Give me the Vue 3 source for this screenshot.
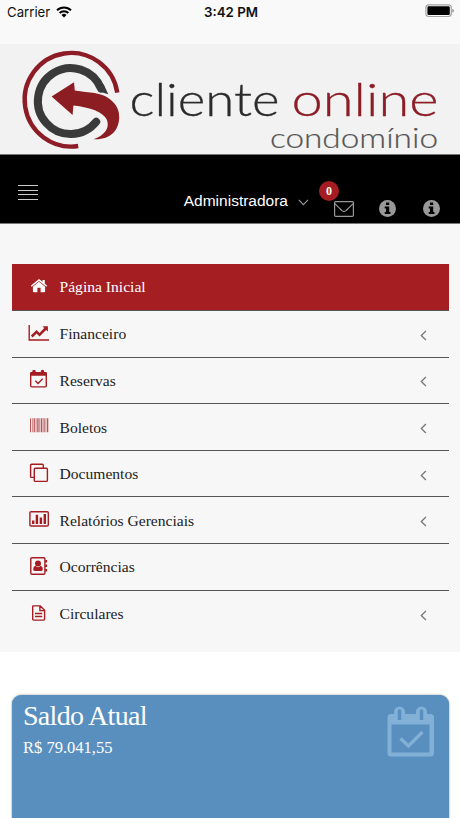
<template>
  <div class="screen">
    <div class="status-bar">
      <div class="carrier">
        <span>Carrier</span>
        <svg class="wifi" width="16" height="12" viewBox="0 0 16 12">
          <path d="M1 4.3a10 10 0 0 1 14 0" />
          <path d="M3.6 7a6.3 6.3 0 0 1 8.8 0" />
          <path class="dot" d="M8 11.4 5.5 8.9a3.6 3.6 0 0 1 5 0z" />
        </svg>
      </div>
      <span class="clock">3:42 PM</span>
      <svg class="battery" width="30" height="14" viewBox="0 0 30 14">
        <rect x="0.9" y="0.9" width="25.4" height="11.6" rx="3" fill="none" stroke="#a3a3a3" stroke-width="1.2" />
        <rect x="2.4" y="2.3" width="22.4" height="8.8" rx="1.4" fill="#000" />
        <path d="M27.4 4.8q1.5.5 1.5 1.9t-1.5 1.9z" fill="#8c8c8c" />
      </svg>
    </div>

    <header class="brand">
      <svg width="460" height="110" viewBox="0 0 460 110">
        <path class="ring-outer" d="M117.3 48.6A46.6 46.8 0 1 0 78.2 102" />
        <path class="ring-inner" d="M101 44.500A32.8 33 0 1 0 96.2 77.8" />
        <path class="ring-tip" d="M103.500 40 108.3 50.2 99 47.500 97 43z" />
        <path
          class="arrow"
          d="M51.6 52.6 74 38.3 74.8 46.6C90 49 101 48.5 109 54.5C117 60 119.5 67 119.2 74C118.5 87 110 96.2 93.5 95.2C104 91.5 110 85 107 76C103 67.5 90 63.5 73.4 61.5L72.6 71z"
        />
        <text class="word dark" x="129.5" y="72" textLength="150" lengthAdjust="spacingAndGlyphs">cliente</text>
        <text class="word red" x="291.5" y="72" textLength="147" lengthAdjust="spacingAndGlyphs">online</text>
        <text class="sub" x="270" y="103.5" textLength="168" lengthAdjust="spacingAndGlyphs">condomínio</text>
      </svg>
    </header>

    <nav class="topbar">
      <button class="burger" aria-label="Menu">
        <i v-for="n in 4" :key="n"></i>
      </button>
      <div class="profile">
        <span>Administradora</span>
        <svg width="11" height="7" viewBox="0 0 11 7">
          <path d="M0.8 0.8 5.4 5.6 10 0.8" fill="none" stroke="#999" stroke-width="1.1" />
        </svg>
      </div>
      <div class="mail">
        <svg width="20" height="16" viewBox="0 0 20 16" fill="none" stroke="#999" stroke-width="1.2">
          <rect x="0.6" y="0.6" width="18.8" height="14.8" rx="1.2" />
          <path d="M0.8 2.6C4 5.8 6 7.8 8 9.6Q10 11.2 12 9.6C14 7.8 16 5.8 19.2 2.6" />
        </svg>
        <span class="badge">0</span>
      </div>
      <svg v-for="n in 2" :key="n" class="info" width="17" height="17" viewBox="0 0 17 17">
        <circle cx="8.5" cy="8.5" r="8.5" fill="#999" />
        <path d="M7 2.6h3.2v2.5H7zM5.7 6.4h4.5v5.5h1.3v2H5.7v-2H7V8.4H5.7z" fill="#000" />
      </svg>
    </nav>

    <section class="menu-area">
      <ul class="menu">
        <li
          v-for="item in items"
          :key="item.label"
          class="menu-item"
          :class="{ active: item.active }"
        >
          <svg class="icon" width="24" height="24" viewBox="0 0 24 24">
            <path v-if="item.solid" class="solid" :d="item.solid" />
            <path v-if="item.line" class="line" :d="item.line" />
            <path v-if="item.bars" class="bars" :d="item.bars" />
          </svg>
          <span class="label">{{ item.label }}</span>
          <svg v-if="item.children" class="chevron" width="7" height="11" viewBox="0 0 7 11">
            <path d="M5.9 1 1.3 5.5 5.9 10" fill="none" stroke="#777" stroke-width="1.3" />
          </svg>
        </li>
      </ul>
    </section>

    <section class="cards">
      <article class="card">
        <div>
          <h2>Saldo Atual</h2>
          <p>R$ 79.041,55</p>
        </div>
        <svg class="card-icon" width="48" height="52" viewBox="0 0 48 52">
          <path
            fill-rule="evenodd"
            d="M4 8H7V6a5.5 5.5 0 0 1 11 0v2h11V6a5.5 5.5 0 0 1 11 0v2h3.500a3.500 3.500 0 0 1 3.500 3.500V47a3.500 3.500 0 0 1-3.500 3.500H4A3.500 3.500 0 0 1 .5 47V11.500A3.500 3.500 0 0 1 4 8zM4.500 18.500v28h38v-28zM10.800 5v9h3.400V5a1.700 1.700 0 0 0-3.400 0zM32.800 5v9h3.400V5a1.700 1.700 0 0 0-3.400 0z"
          />
          <path class="check" d="M13.500 32.500 21.500 40 35.500 26" />
        </svg>
      </article>
    </section>
  </div>
</template>

<script setup>
const items = [
  {
    label: 'Página Inicial',
    active: true,
    solid: 'M12 6.800 18.100 11.700V16.200Q18.100 17.300 17 17.300H13.600V12.800H10.400V17.300H7Q5.900 17.300 5.900 16.200V11.700zM12 4 15.500 6.800V5H17.800V8.700L20.200 10.700 19.300 11.800 12 5.900 4.700 11.800 3.800 10.700z',
  },
  {
    label: 'Financeiro',
    children: true,
    solid: 'M1.500 3H2.900V17.200H22V18.700H1.500zM15.500 4.200H20.900V9.600L19.100 7.900 12.500 14.400 9.600 11.600 5.600 15.600 3.900 13.600 9.600 8.100 12.500 10.900 17.300 6z',
  },
  {
    label: 'Reservas',
    children: true,
    solid: 'M3 5Q3 3.900 4.200 3.900H5.200Q5.200 1.800 7 1.800T8.800 3.900H13.700Q13.700 1.800 15.500 1.800T17.300 3.900H18.700Q20 3.900 20 5V7.700H3z',
    line: 'M3.700 7V17.800Q3.700 18.900 4.800 18.900H18.200Q19.300 18.900 19.300 17.800V7M8.300 12.800 11 15.400 15.700 10.700',
  },
  {
    label: 'Boletos',
    children: true,
    bars: 'M3 3.300h1.100v14H3zM5 3.300h.6v14H5zM6.600 3.300h1.300v14H6.600zM8.700 3.300h.7v14h-.7zM10.200 3.300h1.400v14h-1.400zM12.400 3.300h.6v14h-.6zM13.700 3.300h1.400v14h-1.400zM15.700 3.300h.8v14h-.8zM17.200 3.300h.7v14h-.7zM18.600 3.300h.7v14h-.7zM20 3.300h1.300v14H20z',
  },
  {
    label: 'Documentos',
    children: true,
    line: 'M8.400 6.200H19.300Q20.400 6.200 20.400 7.200V18.400Q20.400 19.400 19.300 19.400H8.400Q7.300 19.400 7.300 18.400V7.200Q7.300 6.200 8.400 6.200zM7.300 15.400H4.700Q3.600 15.400 3.600 14.400V3.200Q3.600 2.200 4.700 2.200H15.200Q16.300 2.200 16.300 3.200V6.200',
  },
  {
    label: 'Relatórios Gerenciais',
    children: true,
    line: 'M4 3.700H20.200Q21.300 3.700 21.300 4.700V17Q21.300 18 20.200 18H4Q2.900 18 2.900 17V4.700Q2.900 3.700 4 3.700z',
    solid: 'M5 12.500h2.400v3.400H5zM8.700 6.700h2.400v9.200H8.700zM12.700 9.400h2.400v6.500h-2.400zM16.600 6h2.400v9.900h-2.400z',
  },
  {
    label: 'Ocorrências',
    line: 'M5 2.700H16.700Q17.900 2.700 17.900 3.800V18.300Q17.900 19.300 16.700 19.300H5Q3.800 19.300 3.800 18.300V3.800Q3.800 2.700 5 2.700z',
    solid: 'M11 5.600a3 3 0 1 1 0 6 3 3 0 0 1 0-6zM8.200 10.800Q11 13.600 13.800 10.800Q15.800 11.600 15.800 14.200Q15.800 16 14.300 16H7.700Q6.200 16 6.200 14.200Q6.200 11.600 8.200 10.800zM18.200 5h1.900v2.600h-1.900zM18.200 9.500h1.900v2.600h-1.900zM18.200 14h1.900v2.600h-1.900z',
  },
  {
    label: 'Circulares',
    children: true,
    line: 'M6.200 3.900H13.300L17.600 8.200V17Q17.600 18.100 16.600 18.100H6.600Q5.700 18.100 5.700 17.100V4.500Q5.700 3.900 6.200 3.900M12.900 4.200V8.600H17.400M8 11.500H15.200M8 14.500H15.200',
  },
]
</script>

<style>
body {
  margin: 0;
  background: #fff;
}
</style>

<style scoped>
.screen {
  width: 460px;
  height: 818px;
  overflow: hidden;
  background: #fff;
  font-family: "Liberation Serif", serif;
  color: #222;
}

.status-bar {
  display: grid;
  grid-template-columns: 1fr auto 1fr;
  align-items: start;
  box-sizing: border-box;
  height: 44px;
  padding: 4px 5px 0 7px;
  background: #f9f9f9;
  font: 13.2px/16px Inter, sans-serif;
  color: #111;
}

.carrier {
  display: flex;
  align-items: center;
  gap: 6px;
}

.wifi {
  fill: none;
  stroke: #000;
  stroke-width: 2;
}

.wifi .dot {
  fill: #000;
  stroke: none;
}

.clock {
  font-size: 13.3px;
  font-weight: 600;
}

.battery {
  justify-self: end;
}

.brand {
  height: 110px;
  background: #f2f2f2;
}

.brand svg {
  display: block;
}

.ring-outer {
  fill: none;
  stroke: #8c1d26;
  stroke-width: 4.4;
}

.ring-inner {
  fill: none;
  stroke: #3a3a3a;
  stroke-width: 8;
  stroke-linecap: round;
}

.ring-tip {
  fill: #3a3a3a;
}

.arrow {
  fill: #8c1d22;
}

.word {
  font: 300 46px Lato, sans-serif;
  stroke-width: 0.3;
}

.dark {
  fill: #2b2b2b;
  stroke: #2b2b2b;
}

.red {
  fill: #8c1d26;
  stroke: #8c1d26;
}

.sub {
  font: 300 28px Lato, sans-serif;
  fill: #555;
  stroke: #555;
  stroke-width: 0.2;
}

.topbar {
  display: flex;
  align-items: flex-end;
  box-sizing: border-box;
  height: 70px;
  padding: 0 20px 7px 18px;
  border-top: 1px solid #777;
  border-bottom: 1px solid #777;
  background: #000;
}

.burger {
  display: flex;
  flex-direction: column;
  gap: 3.4px;
  width: 20px;
  margin: 0 0 16px;
  padding: 0;
  border: 0;
  background: none;
}

.burger i {
  height: 1.2px;
  background: #ccc;
}

.profile {
  display: flex;
  align-items: center;
  gap: 10px;
  margin: 0 0 6px auto;
  font: 15.5px/18px "Liberation Sans", sans-serif;
  color: #fff;
}

.profile svg {
  margin-top: 2px;
}

.mail {
  position: relative;
  height: 16px;
  margin: 0 25px -1px 25px;
}

.mail svg,
.info {
  display: block;
}

.info {
  margin-bottom: -1px;
}

.info + .info {
  margin-left: 27px;
}

.badge {
  position: absolute;
  top: -20px;
  left: -15px;
  width: 20px;
  height: 20px;
  border-radius: 50%;
  background: #a51d22;
  font-size: 12px;
  font-weight: bold;
  line-height: 21px;
  text-align: center;
  color: #fff;
}

.menu-area {
  box-sizing: border-box;
  height: 428px;
  padding: 39.7px 11.5px 0;
  background: #f7f7f7;
}

.menu {
  margin: 0;
  padding: 0;
  list-style: none;
}

.menu-item {
  display: flex;
  align-items: center;
  box-sizing: border-box;
  height: 46.6px;
  padding: 0 22px 0 15.5px;
  border-bottom: 1px solid #555;
  font-size: 15.6px;
}

.menu-item:last-child {
  border-bottom: 0;
}

.menu-item.active {
  height: 47.4px;
  background: #a41e22;
  color: #fff;
}

.icon {
  margin-right: 8.5px;
}

.label {
  margin-top: 1px;
}

.solid,
.bars {
  fill: #a51d22;
}

.bars {
  opacity: 0.75;
}

.line {
  fill: none;
  stroke: #a51d22;
  stroke-width: 1.4;
}

.active .solid {
  fill: #fff;
}

.chevron {
  margin: 3px 0 0 auto;
}

.cards {
  padding: 42.5px 11.5px 0;
}

.card {
  display: flex;
  justify-content: space-between;
  box-sizing: border-box;
  height: 160px;
  padding: 4px 13.5px 0 11.5px;
  border-radius: 9px;
  background: #588fbe;
  box-shadow: 0 0 2px rgba(0, 0, 0, 0.5);
  color: #fff;
}

.card h2 {
  margin: 0;
  font-size: 28px;
  font-weight: normal;
  line-height: 34px;
  letter-spacing: -0.7px;
}

.card p {
  margin: 5px 0 0;
  font-size: 16.5px;
  line-height: 20px;
}

.card-icon {
  margin-top: 7px;
  fill: #82b0d6;
}

.check {
  fill: none;
  stroke: #82b0d6;
  stroke-width: 3.4;
}
</style>
